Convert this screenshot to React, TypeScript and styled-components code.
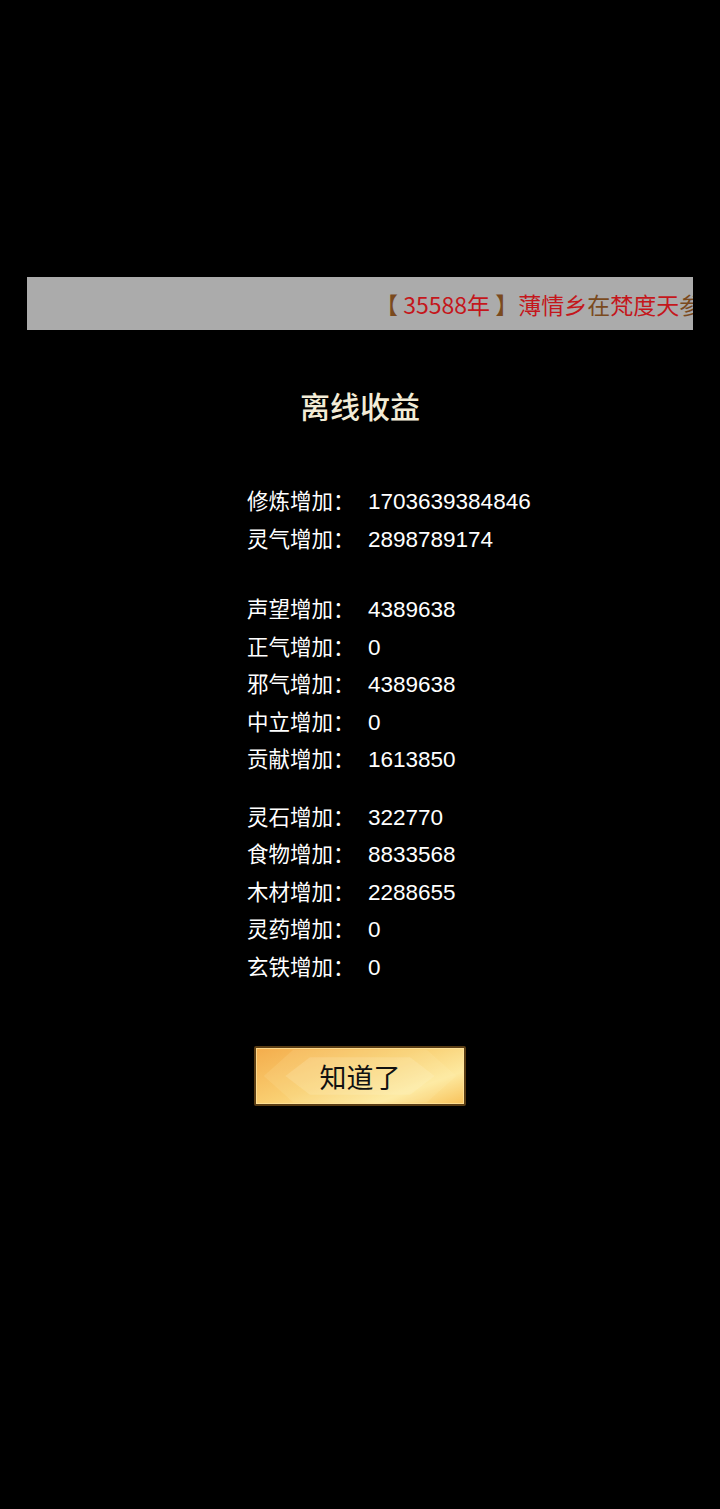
import styled, { createGlobalStyle } from 'styled-components';

const GlobalStyle = createGlobalStyle`
  html, body {
    margin: 0;
    padding: 0;
    background: #000;
  }
  body {
    font-family: "Liberation Sans", "Noto Sans CJK SC", sans-serif;
  }
`;

type Reward = {
  label: string;
  value: string;
};

const groups: Reward[][] = [
  [
    { label: '修炼增加', value: '1703639384846' },
    { label: '灵气增加', value: '2898789174' },
  ],
  [
    { label: '声望增加', value: '4389638' },
    { label: '正气增加', value: '0' },
    { label: '邪气增加', value: '4389638' },
    { label: '中立增加', value: '0' },
    { label: '贡献增加', value: '1613850' },
  ],
  [
    { label: '灵石增加', value: '322770' },
    { label: '食物增加', value: '8833568' },
    { label: '木材增加', value: '2288655' },
    { label: '灵药增加', value: '0' },
    { label: '玄铁增加', value: '0' },
  ],
];

export default function App() {
  return (
    <Page>
      <GlobalStyle />
      <Marquee>
        <MarqueeText>
          <Tone $c="brown">【 </Tone>
          <Tone $c="red">35588年</Tone>
          <Tone $c="brown"> 】</Tone>
          <Tone $c="red">薄情乡</Tone>
          <Tone $c="brown">在</Tone>
          <Tone $c="red">梵度天</Tone>
          <Tone $c="brown">参</Tone>
        </MarqueeText>
      </Marquee>

      <Title>离线收益</Title>

      <List>
        {groups.map((group, gi) => (
          <Group key={gi} $gap={gi === 1 ? 33 : gi === 2 ? 20 : 0}>
            {group.map((r) => (
              <Row key={r.label}>
                <Label>{r.label}：</Label>
                <Value>{r.value}</Value>
              </Row>
            ))}
          </Group>
        ))}
      </List>

      <ButtonWrap>
        <ConfirmButton>
          <Diamond viewBox="0 0 212 60" preserveAspectRatio="none">
            <polygon points="8,30 38,2 174,2 204,30 174,58 38,58" fill="rgba(255,245,200,0.12)" />
            <polygon points="30,30 55,10 157,10 182,30 157,50 55,50" fill="rgba(255,250,215,0.18)" />
          </Diamond>
          <ButtonText>知道了</ButtonText>
        </ConfirmButton>
      </ButtonWrap>
    </Page>
  );
}

const Page = styled.div`
  min-height: 1509px;
  background: #000;
  padding-top: 277px;
  box-sizing: border-box;
`;

const Marquee = styled.div`
  margin-left: 27px;
  width: 666px;
  height: 53px;
  background: #ababab;
  overflow: hidden;
  display: flex;
  align-items: center;
`;

const MarqueeText = styled.div`
  padding-left: 348px;
  white-space: nowrap;
  font-size: 23px;
  font-weight: 400;
  font-family: "Noto Sans CJK SC", sans-serif;
`;

const Tone = styled.span<{ $c: 'red' | 'brown' }>`
  color: ${(p) => (p.$c === 'red' ? '#c4171c' : '#7a4a1e')};
`;

const Title = styled.h1`
  margin: 50px 0 0;
  text-align: center;
  font-size: 30px;
  line-height: 50px;
  font-weight: 500;
  color: #f3ecd6;
  font-family: "Noto Sans CJK SC", sans-serif;
`;

const List = styled.div`
  margin-top: 51px;
  padding-left: 247px;
  display: flex;
  flex-direction: column;
`;

const Group = styled.div<{ $gap: number }>`
  margin-top: ${(p) => p.$gap}px;
  display: flex;
  flex-direction: column;
`;

const Row = styled.div`
  display: flex;
  height: 37.5px;
  align-items: baseline;
  line-height: 37.5px;
  color: #fff;
`;

const Label = styled.span`
  width: 121px;
  font-size: 21.5px;
  font-family: "Noto Sans CJK SC", sans-serif;
`;

const Value = styled.span`
  font-family: "Liberation Sans", sans-serif;
  font-size: 22.5px;
`;

const ButtonWrap = styled.div`
  margin-top: 62px;
  display: flex;
  justify-content: center;
`;

const ConfirmButton = styled.button`
  position: relative;
  width: 212px;
  height: 60px;
  padding: 0;
  border: 2px solid #5a3d14;
  border-radius: 2px;
  background: linear-gradient(160deg, #f4ad4c 0%, #f9cf72 45%, #fde9a0 75%, #f8c25a 100%);
  box-shadow: inset 0 0 0 1px rgba(255, 230, 160, 0.7);
  cursor: pointer;
  display: flex;
  align-items: center;
  justify-content: center;
`;

const Diamond = styled.svg`
  position: absolute;
  inset: 0;
  width: 100%;
  height: 100%;
`;

const ButtonText = styled.span`
  position: relative;
  font-size: 27px;
  color: #111;
  font-family: "Noto Sans CJK SC", sans-serif;
`;
